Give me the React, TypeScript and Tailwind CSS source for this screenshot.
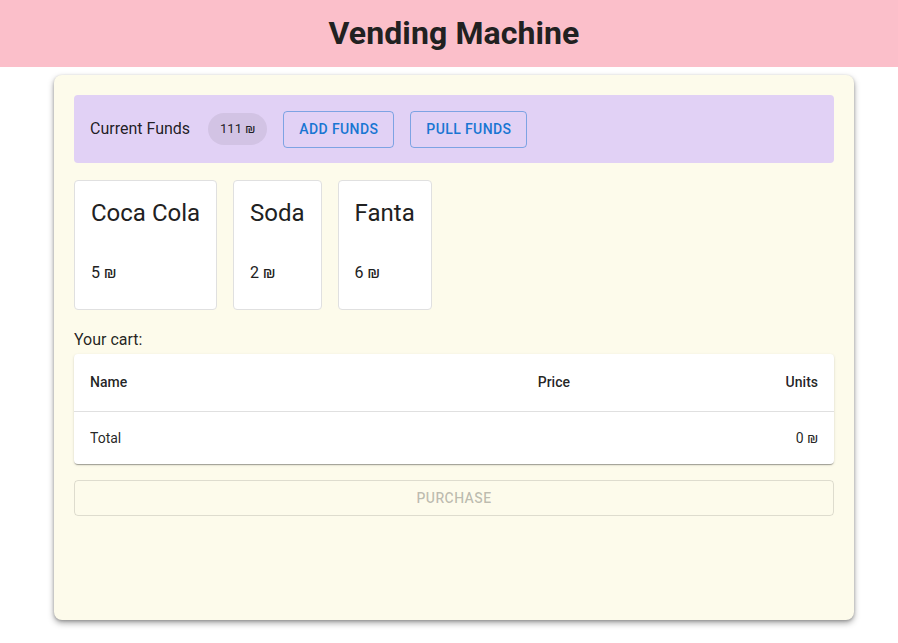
const products = [
  { name: 'Coca Cola', price: 5 },
  { name: 'Soda', price: 2 },
  { name: 'Fanta', price: 6 },
];

const ProductCard = ({ name, price }: { name: string; price: number }) => (
  <div className="h-[130px] rounded border border-[#e0e0e0] bg-white px-4 pt-4">
    <div className="text-2xl leading-8 text-[#212121]">{name}</div>
    <div className="mt-[32px] text-base text-[#212121]">{price} ₪</div>
  </div>
);

const App = () => {
  return (
    <div className="min-h-[643px] bg-white font-['Roboto',sans-serif] text-[rgba(0,0,0,0.87)]">
      <header className="flex h-[67px] items-center justify-center bg-[#fbbfca] pb-[2px] pl-[10px]">
        <h1 className="text-[32px] font-bold tracking-[0.1px] text-[#212121]">Vending Machine</h1>
      </header>

      <main className="ml-[54px] mt-2 h-[545px] w-[800px] rounded-lg bg-[#fdfbeb] p-5 shadow-[0_3px_6px_rgba(0,0,0,0.35),0_1px_3px_rgba(0,0,0,0.2)]">
        <div className="flex h-[68px] items-center rounded bg-[#e1d1f5] px-4">
          <span className="text-base">Current Funds</span>
          <span className="ml-[18px] flex h-8 items-center rounded-full bg-[#d2c3e4] px-[12px] text-[13px]">111 ₪</span>
          <button className="ml-4 h-[37px] rounded border border-[rgba(25,118,210,0.5)] px-[15px] text-sm font-medium tracking-[0.4px] text-[#1976d2] uppercase">
            Add Funds
          </button>
          <button className="ml-4 h-[37px] rounded border border-[rgba(25,118,210,0.5)] px-[15px] text-sm font-medium tracking-[0.4px] text-[#1976d2] uppercase">
            Pull Funds
          </button>
        </div>

        <div className="mt-[17px] flex gap-4">
          {products.map((p) => (
            <ProductCard key={p.name} name={p.name} price={p.price} />
          ))}
        </div>

        <div className="mt-4 text-base leading-7">Your cart:</div>

        <div className="rounded bg-white shadow-[0_2px_1px_-1px_rgba(0,0,0,0.2),0_1px_1px_0_rgba(0,0,0,0.14),0_1px_3px_0_rgba(0,0,0,0.12)]">
          <table className="w-full text-sm">
            <thead>
              <tr className="h-[57px] border-b border-[#e0e0e0]">
                <th className="px-4 text-left font-medium">Name</th>
                <th className="px-4 text-right font-medium">Price</th>
                <th className="w-[248px] px-4 text-right font-medium">Units</th>
              </tr>
            </thead>
            <tbody>
              <tr className="h-[53px]">
                <td className="px-4">Total</td>
                <td className="px-4"></td>
                <td className="px-4 text-right">0 ₪</td>
              </tr>
            </tbody>
          </table>
        </div>

        <button
          disabled
          className="mt-4 h-9 w-full rounded border border-[rgba(0,0,0,0.12)] text-sm font-medium tracking-[0.4px] text-[rgba(0,0,0,0.26)] uppercase"
        >
          Purchase
        </button>
      </main>
    </div>
  );
};

export default App;
